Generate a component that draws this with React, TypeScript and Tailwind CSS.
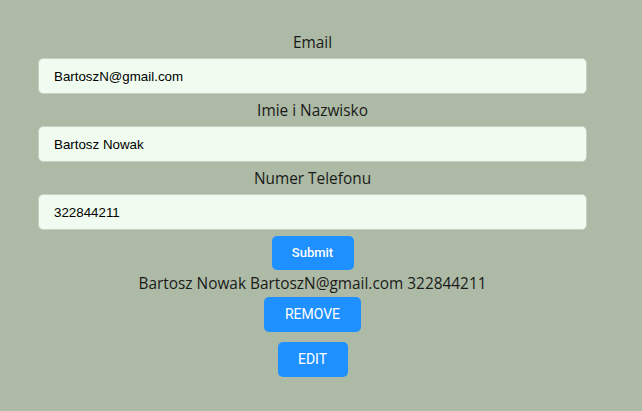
import React from "react";

const field =
  "w-[549px] h-9 rounded-[5px] border border-[#c9cdc6] bg-[#effcef] px-[15px] text-[13.33px] text-black outline-none [font-family:'Liberation_Sans',Arial,sans-serif]";

const label = "block text-center leading-6 text-[15.4px] text-[#1a1a1a] mt-[5px] mb-[3px]";

const btn =
  "rounded-[5px] bg-[#1e90ff] text-white [font-family:Roboto,'Liberation_Sans',sans-serif]";

export default function App() {
  const [name, setName] = React.useState("Bartosz Nowak");
  const [email, setEmail] = React.useState("BartoszN@gmail.com");
  const [phone, setPhone] = React.useState("322844211");

  return (
    <div className="min-h-[411px] w-full bg-[#adbaa5] [font-family:'Open_Sans',sans-serif]">
      <div className="w-[625px]">
        <form
          onSubmit={(e) => e.preventDefault()}
          className="flex flex-col items-center pt-[26px]"
        >
          <label className={label}>Email</label>
          <input className={field} value={email} onChange={(e) => setEmail(e.target.value)} />

          <label className={label}>Imie i Nazwisko</label>
          <input className={field} value={name} onChange={(e) => setName(e.target.value)} />

          <label className={label}>Numer Telefonu</label>
          <input className={field} value={phone} onChange={(e) => setPhone(e.target.value)} />

          <button type="submit" className={`${btn} mt-[6px] h-[34px] w-[82px] text-[13px] font-medium`}>
            Submit
          </button>
        </form>

        <div className="flex flex-col items-center">
          <p className="mt-[2px] leading-6 text-[15.4px] text-[#1a1a1a]">
            {name} {email} {phone}
          </p>
          <button className={`${btn} mt-px h-[35px] w-[97px] text-[14px]`}>REMOVE</button>
          <button className={`${btn} mt-[10px] h-[35px] w-[70px] text-[14px]`}>EDIT</button>
        </div>
      </div>
    </div>
  );
}
